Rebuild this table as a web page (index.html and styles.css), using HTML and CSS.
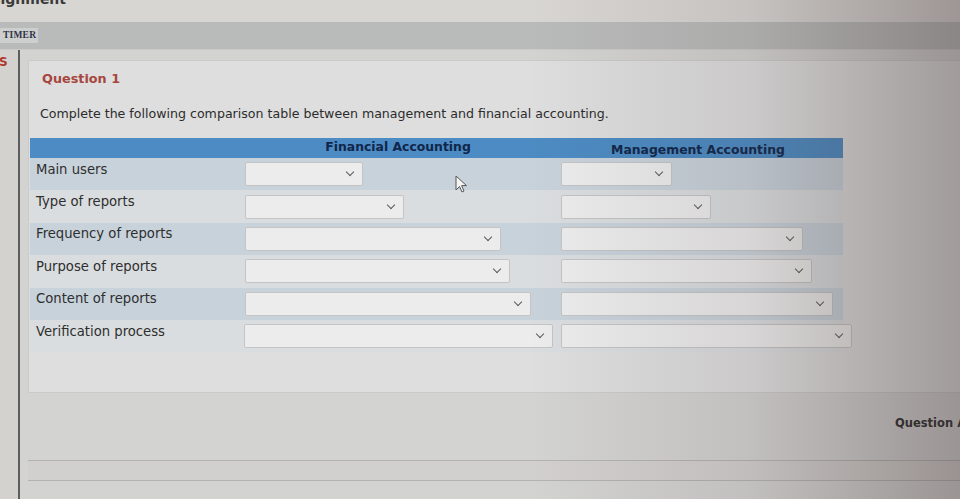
FILE: index.html
```html
<!DOCTYPE html>
<html>
<head>
<meta charset="utf-8">
<link rel="stylesheet" href="styles.css">
</head>
<body>
<div class="page">
  <div class="crumb"><span class="crumb-text">Assignment</span></div>
  <div class="timerbar"><span class="timer">TIMER</span></div>
  <div class="main">
    <div class="side"><span class="side-s">S</span></div>
    <div class="content">
      <div class="panel">
        <div class="q-title">Question 1</div>
        <div class="q-text">Complete the following comparison table between management and financial accounting.</div>
        <div class="table">
          <div class="thead">
            <div class="th th-label"></div>
            <div class="th th-fin">Financial Accounting</div>
            <div class="th th-mgmt">Management Accounting</div>
          </div>
          <div class="row dark">
            <div class="lbl">Main users</div>
            <div class="cell cell-fin"><div class="sel" style="width:118px"><span class="chev"></span></div></div>
            <div class="cell cell-mgmt"><div class="sel" style="width:111px"><span class="chev"></span></div></div>
          </div>
          <div class="row light">
            <div class="lbl">Type of reports</div>
            <div class="cell cell-fin"><div class="sel" style="width:159px"><span class="chev"></span></div></div>
            <div class="cell cell-mgmt"><div class="sel" style="width:150px"><span class="chev"></span></div></div>
          </div>
          <div class="row dark">
            <div class="lbl">Frequency of reports</div>
            <div class="cell cell-fin"><div class="sel" style="width:256px"><span class="chev"></span></div></div>
            <div class="cell cell-mgmt"><div class="sel" style="width:242px"><span class="chev"></span></div></div>
          </div>
          <div class="row light">
            <div class="lbl">Purpose of reports</div>
            <div class="cell cell-fin"><div class="sel" style="width:265px"><span class="chev"></span></div></div>
            <div class="cell cell-mgmt"><div class="sel" style="width:251px"><span class="chev"></span></div></div>
          </div>
          <div class="row dark">
            <div class="lbl">Content of reports</div>
            <div class="cell cell-fin"><div class="sel" style="width:286px"><span class="chev"></span></div></div>
            <div class="cell cell-mgmt"><div class="sel" style="width:272px"><span class="chev"></span></div></div>
          </div>
          <div class="row light">
            <div class="lbl">Verification process</div>
            <div class="cell cell-fin"><div class="sel" style="width:309px"><span class="chev"></span></div></div>
            <div class="cell cell-mgmt"><div class="sel" style="width:291px"><span class="chev"></span></div></div>
          </div>
        </div>
        <svg class="cursor" width="13" height="19" viewBox="0 0 13 19"><path d="M1 1 L1 15 L4.5 11.5 L7 17 L9 16 L6.6 10.6 L11.5 10.6 Z" fill="#f4f4f4" stroke="#555" stroke-width="1"/></svg>
      </div>
      <div class="footer">
        <span class="next">Question Attempt</span>
      </div>
      <div class="band"></div>
    </div>
  </div>
  <div class="shade"></div>
</div>
</body>
</html>
```
FILE: styles.css
```css
html, body {
  margin: 0;
  padding: 0;
}
body {
  font-family: "DejaVu Sans", Verdana, sans-serif;
  background: #d6d4d1;
}
.page {
  position: relative;
  width: 960px;
  height: 499px;
  overflow: hidden;
  background: #d6d4d1;
}
.crumb {
  height: 22px;
  overflow: hidden;
  background: #d8d6d3;
}
.crumb-text {
  display: block;
  margin-top: -9px;
  margin-left: -27px;
  font-size: 14px;
  font-weight: bold;
  color: #3a3a3a;
  line-height: 16px;
}
.timerbar {
  height: 28px;
  background: #b9bbba;
  border-bottom: 1px solid #c9cac9;
  box-sizing: border-box;
  padding-top: 6px;
}
.timer {
  display: block;
  width: 38px;
  height: 15px;
  box-sizing: border-box;
  background: #cdcfce;
  font-family: "Liberation Serif", serif;
  font-weight: bold;
  font-size: 9.5px;
  line-height: 15px;
  padding-left: 3px;
  color: #2e3348;
  letter-spacing: 0.2px;
}
.main {
  display: flex;
  height: 449px;
}
.side {
  flex: 0 0 18px;
  width: 18px;
  border-right: 2px solid #5e5e5e;
  background: #d4d2cf;
  overflow: hidden;
}
.side-s {
  display: block;
  margin-left: -1px;
  margin-top: 5px;
  font-weight: bold;
  font-size: 12px;
  line-height: 14px;
  color: #b0352c;
}
.content {
  flex: 1 1 auto;
  min-width: 0;
  background: #d3d3d2;
  padding-top: 10px;
  padding-left: 8px;
}
.panel {
  position: relative;
  height: 333px;
  box-sizing: border-box;
  background: #dedede;
  border: 1px solid #cacaca;
  border-right: none;
  padding-top: 10px;
  padding-left: 1px;
}
.q-title {
  padding-left: 12px;
  font-size: 12.8px;
  font-weight: bold;
  color: #a6463f;
  line-height: 16px;
}
.q-text {
  margin-top: 19px;
  padding-left: 10px;
  font-size: 12.6px;
  color: #2c2c2c;
  line-height: 16px;
}
.table {
  margin-top: 16px;
  width: 813px;
}
.thead {
  display: flex;
  height: 20px;
  background: #4c8bc3;
}
.th {
  font-size: 12.4px;
  font-weight: bold;
  color: #10264a;
  line-height: 14px;
  text-align: center;
}
.th-label { width: 213px; }
.th-fin { width: 310px; padding-top: 2px; }
.th-mgmt { width: 290px; padding-top: 5px; }
.row {
  display: flex;
  align-items: center;
  height: 32.4px;
}
.row.dark { background: #c8d2db; }
.row.light { background: #dadddf; }
.lbl {
  width: 205px;
  padding-left: 6px;
  padding-bottom: 9px;
  font-size: 13.2px;
  line-height: 16px;
  color: #2e2e2e;
  white-space: nowrap;
}
.cell-fin {
  width: 309px;
  padding-left: 4px;
}
.cell-mgmt {
  width: 282px;
  padding-left: 8px;
}
.sel {
  position: relative;
  height: 24px;
  box-sizing: border-box;
  background: #ececec;
  border: 1px solid #c4c4c4;
  border-radius: 2px;
}
.chev {
  position: absolute;
  right: 9px;
  top: 6px;
  width: 5px;
  height: 5px;
  border-right: 1.6px solid #5a5a5a;
  border-bottom: 1.6px solid #5a5a5a;
  transform: rotate(45deg);
}
.cursor {
  position: absolute;
  left: 426px;
  top: 114px;
}
.footer {
  height: 67px;
  box-sizing: border-box;
  padding-top: 19px;
  padding-left: 867px;
  white-space: nowrap;
  overflow: hidden;
}
.next {
  font-size: 11.5px;
  font-weight: bold;
  color: #2a2a2a;
}
.band {
  height: 19px;
  border-top: 1px solid #b3b3b3;
  border-bottom: 1px solid #b3b3b3;
  background: #d2d0ce;
}
.shade {
  position: absolute;
  left: 0;
  top: 0;
  right: 0;
  bottom: 0;
  pointer-events: none;
  background: linear-gradient(to right, rgba(70,55,55,0) 0%, rgba(70,55,55,0) 55%, rgba(70,55,55,0.12) 78%, rgba(70,55,55,0.4) 100%);
}
```
